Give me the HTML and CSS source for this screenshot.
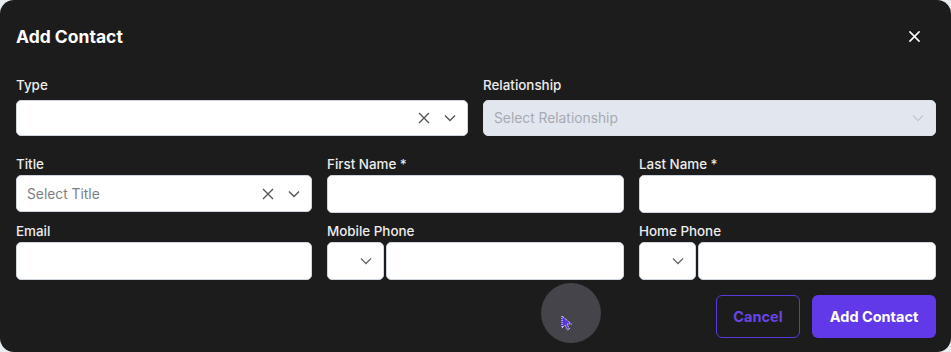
FILE: index.html
```html
<!DOCTYPE html>
<html>
<head>
<meta charset="utf-8">
<link rel="stylesheet" href="styles.css">
</head>
<body>
<div class="modal">
  <div class="header">
    <h2 class="title">Add Contact</h2>
    <button class="close" aria-label="Close">
      <svg width="11" height="11" viewBox="0 0 12 12"><path d="M1 1L11 11M11 1L1 11" stroke="#fff" stroke-width="1.7" stroke-linecap="round"/></svg>
    </button>
  </div>

  <div class="row row-1 cols-2">
    <div class="field">
      <label class="label">Type</label>
      <div class="control select">
        <span class="value"></span>
        <span class="icons">
          <svg class="ico-x" width="12" height="12" viewBox="0 0 12 12"><path d="M1 1L11 11M11 1L1 11" stroke="#555" stroke-width="1.4"/></svg>
          <svg class="ico-chev" width="12" height="8" viewBox="0 0 12 8"><path d="M1 1.5L6 6.5L11 1.5" fill="none" stroke="#555" stroke-width="1.4"/></svg>
        </span>
      </div>
    </div>
    <div class="field">
      <label class="label">Relationship</label>
      <div class="control select disabled">
        <span class="value placeholder">Select Relationship</span>
        <span class="icons">
          <svg class="ico-chev" width="12" height="8" viewBox="0 0 12 8"><path d="M1 1.5L6 6.5L11 1.5" fill="none" stroke="#c6cad2" stroke-width="1.3"/></svg>
        </span>
      </div>
    </div>
  </div>

  <div class="row row-2 cols-3">
    <div class="field">
      <label class="label">Title</label>
      <div class="control select tall-s">
        <span class="value placeholder dark">Select Title</span>
        <span class="icons">
          <svg class="ico-x" width="12" height="12" viewBox="0 0 12 12"><path d="M1 1L11 11M11 1L1 11" stroke="#555" stroke-width="1.4"/></svg>
          <svg class="ico-chev" width="12" height="8" viewBox="0 0 12 8"><path d="M1 1.5L6 6.5L11 1.5" fill="none" stroke="#555" stroke-width="1.4"/></svg>
        </span>
      </div>
    </div>
    <div class="field">
      <label class="label">First Name *</label>
      <div class="control input"></div>
    </div>
    <div class="field">
      <label class="label">Last Name *</label>
      <div class="control input"></div>
    </div>
  </div>

  <div class="row row-3 cols-3">
    <div class="field">
      <label class="label">Email</label>
      <div class="control input"></div>
    </div>
    <div class="field">
      <label class="label">Mobile Phone</label>
      <div class="phone">
        <div class="control country">
          <svg class="ico-chev" width="12" height="8" viewBox="0 0 12 8"><path d="M1 1.5L6 6.5L11 1.5" fill="none" stroke="#666" stroke-width="1.3"/></svg>
        </div>
        <div class="control input grow"></div>
      </div>
    </div>
    <div class="field">
      <label class="label">Home Phone</label>
      <div class="phone">
        <div class="control country">
          <svg class="ico-chev" width="12" height="8" viewBox="0 0 12 8"><path d="M1 1.5L6 6.5L11 1.5" fill="none" stroke="#666" stroke-width="1.3"/></svg>
        </div>
        <div class="control input grow"></div>
      </div>
    </div>
  </div>

  <div class="footer">
    <button class="btn btn-outline">Cancel</button>
    <button class="btn btn-primary">Add Contact</button>
  </div>

  <div class="cursor-spot">
    <svg class="cursor" width="12" height="16" viewBox="0 0 12 16"><path d="M1 1L1 13L4 10L6.5 15L8.5 14L6 9L10.5 9Z" fill="#5b36e0" stroke="#fff" stroke-width="1" stroke-dasharray="1 1"/></svg>
  </div>
</div>
</body>
</html>
```

FILE: styles.css
```css
* { box-sizing: border-box; }
html, body { margin: 0; padding: 0; }
body {
  background: #e9ecef;
  font-family: Inter, "Noto Sans", "Liberation Sans", sans-serif;
  width: 951px;
  height: 352px;
  overflow: hidden;
}
.modal {
  position: relative;
  width: 951px;
  height: 352px;
  background: #1c1c1c;
  border-radius: 14px;
  padding: 0 15px 0 16px;
  color: #ececec;
}
.header {
  display: flex;
  align-items: center;
  justify-content: space-between;
  height: 73px;
  padding-top: 0;
}
.title {
  margin: 0;
  font-size: 17.5px;
  font-weight: 700;
  color: #fff;
}
.close {
  background: none;
  border: 0;
  padding: 0;
  margin-right: 16px;
  width: 11px;
  height: 11px;
  display: flex;
}
.row { display: grid; column-gap: 15px; }
.cols-2 { grid-template-columns: 452px 453px; }
.cols-3 { grid-template-columns: 296px 297px 297px; }
.row-1 { margin-top: 4px; }
.row-2 { margin-top: 20px; }
.row-3 { margin-top: 10px; }
.field { display: flex; flex-direction: column; }
.label {
  font-size: 13.4px;
  line-height: 16px;
  font-weight: 500;
  color: #ececec;
}
.row-1 .label { margin-bottom: 7px; }
.row-2 .label, .row-3 .label { margin-bottom: 3px; }
.control {
  background: #fff;
  border: 1px solid #cfd5df;
  border-radius: 5px;
}
.select {
  height: 36px;
  display: flex;
  align-items: center;
  justify-content: space-between;
  padding: 0 11px 0 10px;
}
.select.tall-s { height: 37px; }
.select.disabled { background: #e2e6ee; border-color: #dde1e9; }
.value { font-size: 13.8px; }
.placeholder { color: #a6abb3; }
.placeholder.dark { color: #7d7f84; }
.icons { display: flex; align-items: center; gap: 14px; }
.ico-x, .ico-chev { display: block; }
.input { height: 38px; }
.phone { display: flex; gap: 2px; }
.country {
  width: 57px;
  height: 38px;
  display: flex;
  align-items: center;
  justify-content: flex-end;
  padding-right: 11px;
}
.grow { flex: 1; }
.footer {
  display: flex;
  justify-content: flex-end;
  gap: 12px;
  margin-top: 15px;
}
.btn {
  height: 43px;
  border-radius: 6px;
  font-family: inherit;
  font-size: 14.5px;
  font-weight: 700;
  cursor: pointer;
}
.btn-outline {
  width: 84px;
  background: transparent;
  border: 1px solid #5a38dc;
  color: #6945e6;
}
.btn-primary {
  width: 124px;
  background: #6239e8;
  border: 0;
  color: #fff;
}
.cursor-spot {
  position: absolute;
  left: 541px;
  top: 283px;
  width: 60px;
  height: 60px;
  border-radius: 50%;
  background: #45444a;
}
.cursor {
  position: absolute;
  left: 20px;
  top: 32px;
}
```
